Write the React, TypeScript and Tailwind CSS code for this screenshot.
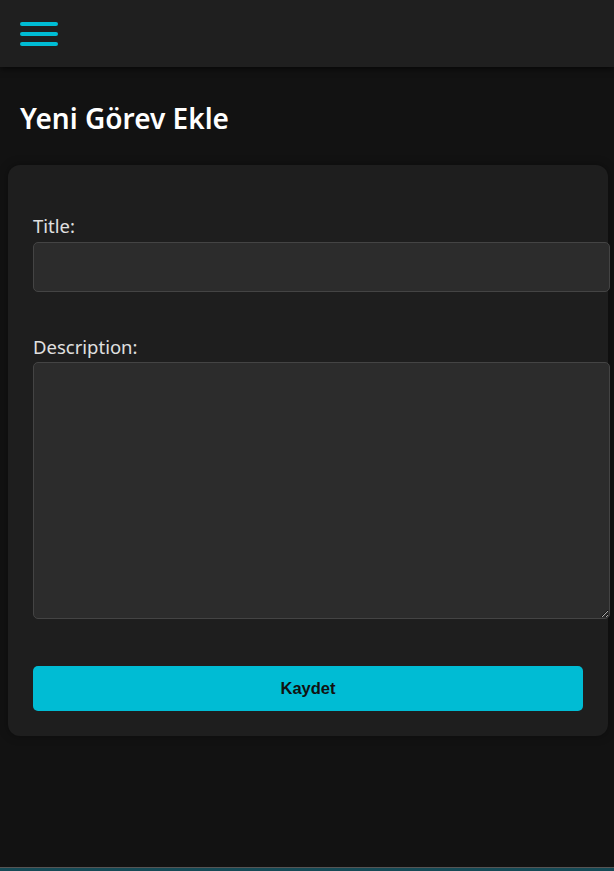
import React, { useState } from 'react';

export default function App() {
  const [title, setTitle] = useState('');
  const [description, setDescription] = useState('');

  return (
    <div className="min-h-[871px] bg-[#121212] text-[#e0e0e0]" style={{ fontFamily: '"Noto Sans", "Open Sans", sans-serif' }}>
      <header className="h-[67px] bg-[#1f1f1f] shadow-[0_2px_6px_rgba(0,0,0,0.6)] flex items-center px-5">
        <button type="button" className="flex flex-col gap-[6px] w-[38px]" aria-label="Menu">
          <span className="block h-[4px] w-[38px] rounded-sm bg-[#00bcd4]" />
          <span className="block h-[4px] w-[38px] rounded-sm bg-[#00bcd4]" />
          <span className="block h-[4px] w-[38px] rounded-sm bg-[#00bcd4]" />
        </button>
      </header>

      <h2 className="px-5 pt-[31px] pb-[27px] text-[28px] leading-[40px] font-semibold text-white">Yeni Görev Ekle</h2>

      <form
        className="mx-2 w-[600px] rounded-xl bg-[#1e1e1e] shadow-[0_0_10px_rgba(0,0,0,0.35)] pl-[25px] pt-[48px] pb-[25px]"
        onSubmit={(e) => e.preventDefault()}
      >
        <label htmlFor="title" className="block text-[18.5px] leading-[26px] text-[#e0e0e0]">Title:</label>
        <input
          id="title"
          type="text"
          value={title}
          onChange={(e) => setTitle(e.target.value)}
          className="block mt-[3px] w-[577px] h-[50px] rounded-[5px] border border-[#444] bg-[#2c2c2c] px-3 text-[#e0e0e0] outline-none"
        />

        <label htmlFor="description" className="block mt-[42px] text-[18.5px] leading-[26px] text-[#e0e0e0]">Description:</label>
        <textarea
          id="description"
          value={description}
          onChange={(e) => setDescription(e.target.value)}
          className="block mt-[2px] w-[577px] h-[257px] rounded-[5px] border border-[#444] bg-[#2c2c2c] p-3 text-[#e0e0e0] outline-none"
        />

        <button
          type="submit"
          className="block mt-[47px] w-[550px] h-[45px] rounded-[5px] bg-[#00bcd4] text-[16.5px] font-bold text-[#111]"
          style={{ fontFamily: '"Liberation Sans", Arial, sans-serif' }}
        >
          Kaydet
        </button>
      </form>

      <div className="fixed bottom-0 left-0 right-0 h-[4px] border-t border-[#555] bg-[#164a56]" />
    </div>
  );
}
